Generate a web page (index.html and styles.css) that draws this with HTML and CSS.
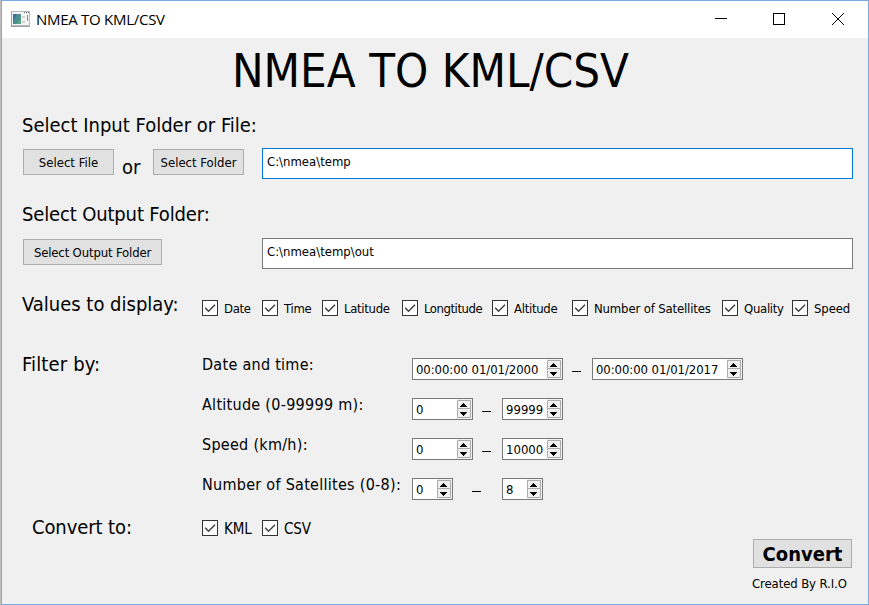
FILE: index.html
```
<!DOCTYPE html>
<html lang="en">
<head>
<meta charset="utf-8">
<title>NMEA TO KML/CSV</title>
<link rel="stylesheet" href="styles.css">
</head>
<body>
<svg class="defs" width="0" height="0">
  <symbol id="check" viewBox="0 0 14 14"><path d="M2.2 6.8 5.5 10.2 12 3.7" fill="none" stroke="#404040" stroke-width="1.5"/></symbol>
  <symbol id="spin" viewBox="0 0 15 20">
    <rect width="15" height="20" fill="#f0f0f0"/>
    <path d="M.5 1.5h13v8H.5zM.5 9.5h13v9H.5z" fill="#f0f0f0" stroke="#acacac"/>
    <path d="M6 4h1v1h1v1h1v1h1v1H3V7h1V6h1V5h1zM3 13h7v1H9v1H8v1H7v1H6v-1H5v-1H4v-1H3z" fill="#000"/>
  </symbol>
</svg>
<div class="window">
  <header class="titlebar">
    <svg class="app-icon" width="19" height="16" viewBox="0 0 19 16">
      <rect x=".5" y=".5" width="18" height="14" fill="#f4f4f4" stroke="#b5bac0"/>
      <path d="M.5 15V.5M0 15.5h19" stroke="#9a9fa3"/>
      <rect x="2" y="3" width="8" height="10" fill="#4a8f93"/>
      <path d="M2 3h4L2 11z" fill="#3e6f9d"/><path d="M10 6v7H5z" fill="#5aa37d"/>
      <rect x="11" y="5" width="3" height="2" fill="#d8d8d8"/><rect x="11" y="10" width="3" height="2" fill="#d0d0d0"/>
      <path d="M16.5 4v6" stroke="#5aa37d"/><path d="M13 1.5h1M15 1.5h1M17 1.5h1" stroke="#51606c"/>
    </svg>
    <span class="caption">NMEA TO KML/CSV</span>
    <svg class="controls" width="130" height="12" viewBox="0 0 130 12" fill="none" stroke="#000" shape-rendering="crispEdges">
      <path d="M0 5.5h12M58.5.5h11v11h-11z"/><path d="M117 0l12 12M129 0l-12 12" shape-rendering="auto"/>
    </svg>
  </header>
  <main class="client">
    <h1>NMEA TO KML/CSV</h1>
    <h2 class="input-label">Select Input Folder or File:</h2>
    <div class="row paths">
      <button class="half">Select File</button><span class="or">or</span><button class="half">Select Folder</button>
      <div class="field focused">C:\nmea\temp</div>
    </div>
    <h2 class="output-label">Select Output Folder:</h2>
    <div class="row paths">
      <button class="wide">Select Output Folder</button>
      <div class="field">C:\nmea\temp\out</div>
    </div>
    <div class="row values">
      <h2>Values to display:</h2>
      <div class="checks">
        <label><svg class="box"><use href="#check"/></svg><span>Date</span></label>
        <label><svg class="box"><use href="#check"/></svg><span>Time</span></label>
        <label><svg class="box"><use href="#check"/></svg><span>Latitude</span></label>
        <label class="long"><svg class="box"><use href="#check"/></svg><span>Longtitude</span></label>
        <label><svg class="box"><use href="#check"/></svg><span>Altitude</span></label>
        <label class="sats"><svg class="box"><use href="#check"/></svg><span>Number of Satellites</span></label>
        <label><svg class="box"><use href="#check"/></svg><span>Quality</span></label>
        <label class="speed"><svg class="box"><use href="#check"/></svg><span>Speed</span></label>
      </div>
    </div>
    <div class="row filters">
      <h2 class="filter-label">Filter by:</h2>
      <div class="filter-list">
        <div class="filter"><span class="name">Date and time:</span>
          <div class="spin date">00:00:00 01/01/2000<svg><use href="#spin"/></svg></div><i class="dash"></i>
          <div class="spin date">00:00:00 01/01/2017<svg><use href="#spin"/></svg></div></div>
        <div class="filter"><span class="name">Altitude (0-99999 m):</span>
          <div class="spin">0<svg><use href="#spin"/></svg></div><i class="dash"></i>
          <div class="spin">99999<svg><use href="#spin"/></svg></div></div>
        <div class="filter"><span class="name">Speed (km/h):</span>
          <div class="spin">0<svg><use href="#spin"/></svg></div><i class="dash"></i>
          <div class="spin">10000<svg><use href="#spin"/></svg></div></div>
        <div class="filter"><span class="name">Number of Satellites (0-8):</span>
          <div class="spin small">0<svg><use href="#spin"/></svg></div><i class="dash far"></i>
          <div class="spin small">8<svg><use href="#spin"/></svg></div></div>
      </div>
    </div>
    <div class="row formats">
      <h2>Convert to:</h2>
      <div class="checks">
        <label><svg class="box"><use href="#check"/></svg><span>KML</span></label>
        <label><svg class="box"><use href="#check"/></svg><span>CSV</span></label>
      </div>
    </div>
    <footer>
      <button class="convert">Convert</button>
      <div class="credit">Created By R.I.O</div>
    </footer>
  </main>
</div>
</body>
</html>
```
FILE: styles.css
```
* { box-sizing: border-box; }
body {
  margin: 0;
  padding-left: 1px;
  height: 605px;
  background: #bdbdbd;
  color: #000;
  font: 13px "DejaVu Sans Condensed", "DejaVu Sans", sans-serif;
  overflow: hidden;
  white-space: nowrap;
}
.defs { display: block; height: 0; }
.window { height: 605px; border: 1px solid #7aace3; background: #f0f0f0; }
.titlebar { display: flex; height: 37px; padding: 0 23px 0 9px; background: #fff; }
.app-icon { margin-top: 10px; }
.caption { margin-left: 6px; font: 15px/37px "Open Sans", sans-serif; letter-spacing: -0.28px; }
.controls { margin: 12px 0 0 auto; }
.client { padding: 0 15px 0 20px; }
h1, h2 { margin: 0; font-weight: normal; }
h1 { padding-left: 210px; font-size: 47px; line-height: 65px; height: 65px; letter-spacing: 0; }
h2 { font-size: 20px; line-height: 30px; }
.input-label { margin-top: 7px; }
.output-label { margin-top: 20px; letter-spacing: -0.15px; }
.row { display: flex; }
.paths { margin-top: 8px; height: 31px; }
.output-label + .paths { margin-top: 9px; }
button {
  height: 26px;
  margin: 1px 0 0 1px;
  padding: 0;
  border: 1px solid #adadad;
  background: #e1e1e1;
  color: #000;
  font: inherit;
}
.half { width: 91px; }
.wide { width: 139px; letter-spacing: -0.15px; }
.or { width: 38px; padding-left: 8px; font-size: 20px; line-height: 38px; }
.field {
  width: 591px;
  height: 31px;
  margin-left: auto;
  padding-left: 4px;
  border: 1px solid #7a7a7a;
  background: #fff;
  line-height: 25px;
}
.focused { border-color: #0078d7; }
.values { margin-top: 20px; }
.values h2, .filter-label { width: 180px; }
.filter-label { letter-spacing: 0.15px; }
.checks { display: grid; grid-template-columns: 60px 60px 80px 90px 80px 150px 70px 60px; letter-spacing: -0.3px; }
.checks label { display: flex; height: 16px; margin-top: 11px; line-height: 18px; gap: 6px; }
.checks .long { letter-spacing: -0.45px; }
.checks .sats { letter-spacing: -0.15px; }
.checks .speed { letter-spacing: -0.1px; }
.box { width: 16px; height: 16px; border: 1px solid #333; background: #fff; }
.filters { margin-top: 30px; height: 160px; }
.filter { display: flex; height: 40px; }
.name { width: 210px; font-size: 16px; line-height: 32px; letter-spacing: 0.28px; }
.spin {
  display: flex;
  justify-content: space-between;
  width: 61px;
  height: 22px;
  margin-top: 9px;
  padding-left: 3px;
  border: 1px solid #7a7a7a;
  background: #fff;
  line-height: 21px;
}
.spin svg { width: 15px; height: 20px; }
.date { width: 151px; letter-spacing: -0.07px; }
.small { width: 41px; }
.dash { width: 9px; height: 1px; margin: 22px 11px 0 9px; background: #000; }
.far { margin-left: 19px; margin-right: 21px; }
.formats { margin-top: 6px; height: 24px; }
.formats h2 { width: 180px; padding-left: 10px; line-height: 24px; letter-spacing: -0.1px; }
.formats .checks { font-size: 15px; letter-spacing: -0.1px; }
.formats .checks label { margin-top: 5px; }
footer { display: flex; flex-direction: column; width: 101px; margin-left: auto; }
.convert { width: 99px; height: 29px; margin: 0 0 0 1px; font-size: 20px; font-weight: bold; }
.credit { margin-top: 7px; line-height: 18px; letter-spacing: -0.1px; }
```
